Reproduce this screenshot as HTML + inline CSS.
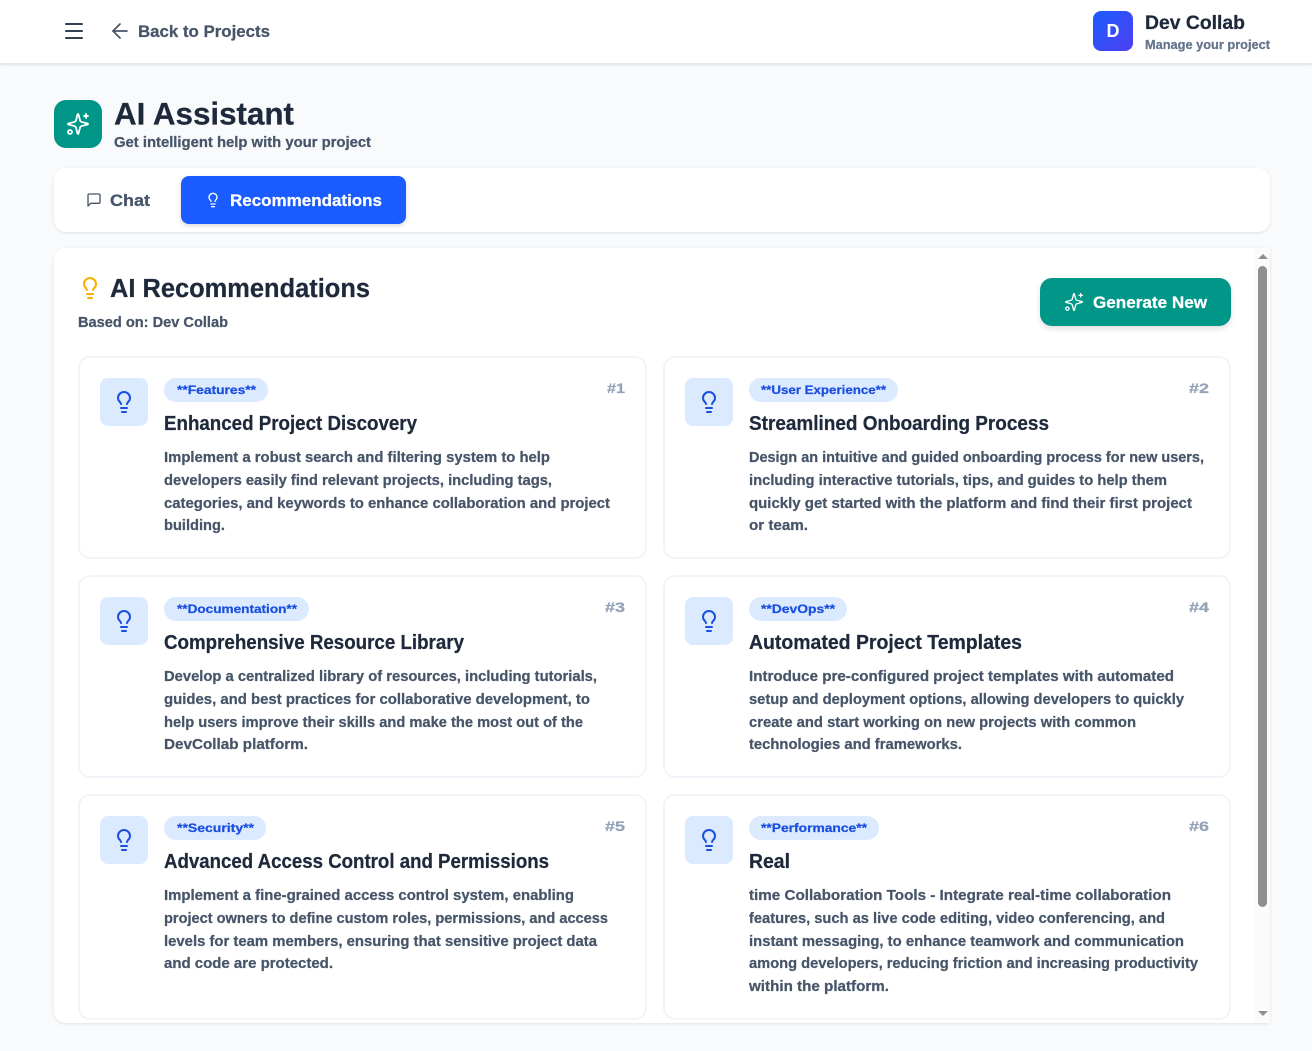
<!DOCTYPE html>
<html lang="en">
<head>
<meta charset="utf-8">
<title>AI Assistant</title>
<style>
html,body{margin:0;padding:0;width:1312px;height:1051px;overflow:hidden;background:#f8fafc}
body{position:relative;font-family:"Liberation Sans",sans-serif}
.b{position:absolute;box-sizing:border-box}
svg.o{position:absolute;left:0;top:0}
text{font-family:"Liberation Sans",sans-serif;font-weight:700;stroke-width:.25px}
.d{font-size:14.8px;fill:#475569;stroke:#475569}
.t{font-size:20px;fill:#1e293b;stroke:#1e293b}
.g{font-size:12.200px;fill:#1a4fe0;stroke:#1a4fe0}
.n{font-size:14px;fill:#94a3b8;stroke:#94a3b8}
.i{fill:none;stroke-linecap:round;stroke-linejoin:round}
.card{background:#fff;border:2px solid #f1f5f9;border-radius:12px}
.ib{background:#dbeafe;border-radius:8px;width:48px;height:48px}
.pill{background:#dbeafe;border-radius:12px;height:24px}
</style>
</head>
<body>
<div class="b" style="left:0;top:0;width:1312px;height:65px;background:#fff;border-bottom:2px solid #e2e8f0;box-shadow:0 1px 2px rgba(0,0,0,.05)"></div>
<div class="b" style="left:1093px;top:11px;width:40px;height:40px;border-radius:8px;background:linear-gradient(135deg,#1a5cff,#4f3ff0)"></div>
<div class="b" style="left:54px;top:100px;width:48px;height:48px;border-radius:12px;background:#009688"></div>
<div class="b" style="left:54px;top:168px;width:1216px;height:64px;border-radius:12px;background:#fff;box-shadow:0 1px 3px rgba(0,0,0,.1)"></div>
<div class="b" style="left:181px;top:176px;width:225px;height:48px;border-radius:8px;background:#1a5cff;box-shadow:0 2px 5px rgba(0,0,0,.15)"></div>
<div class="b" style="left:54px;top:248px;width:1216px;height:775px;border-radius:12px 0 0 12px;background:#fff;box-shadow:0 1px 3px rgba(0,0,0,.1);overflow:hidden">
  <div class="b" style="left:1201px;top:0;width:15px;height:775px;background:#fbfbfb"></div>
  <div class="b" style="left:1204px;top:18px;width:9px;height:641px;border-radius:5px;background:#8f8f8f"></div>
  <div class="b" style="left:1204px;top:6px;width:0;height:0;border-left:5px solid transparent;border-right:5px solid transparent;border-bottom:5px solid #8f8f8f"></div>
  <div class="b" style="left:1204px;top:763px;width:0;height:0;border-left:5px solid transparent;border-right:5px solid transparent;border-top:5px solid #8f8f8f"></div>
</div>
<div class="b" style="left:1040px;top:278px;width:191px;height:48px;border-radius:12px;background:#009688;box-shadow:0 3px 6px rgba(0,0,0,.12)"></div>

<div class="b card" style="left:78px;top:356px;width:569px;height:203px"></div>
<div class="b card" style="left:663px;top:356px;width:568px;height:203px"></div>
<div class="b card" style="left:78px;top:575px;width:569px;height:203px"></div>
<div class="b card" style="left:663px;top:575px;width:568px;height:203px"></div>
<div class="b card" style="left:78px;top:794px;width:569px;height:226px"></div>
<div class="b card" style="left:663px;top:794px;width:568px;height:226px"></div>

<div class="b ib" style="left:100px;top:378px"></div>
<div class="b ib" style="left:685px;top:378px"></div>
<div class="b ib" style="left:100px;top:597px"></div>
<div class="b ib" style="left:685px;top:597px"></div>
<div class="b ib" style="left:100px;top:816px"></div>
<div class="b ib" style="left:685px;top:816px"></div>

<div class="b pill" style="left:164px;top:378px;width:104px"></div>
<div class="b pill" style="left:749px;top:378px;width:149px"></div>
<div class="b pill" style="left:164px;top:597px;width:145px"></div>
<div class="b pill" style="left:749px;top:597px;width:98px"></div>
<div class="b pill" style="left:164px;top:816px;width:102px"></div>
<div class="b pill" style="left:749px;top:816px;width:130px"></div>

<svg class="o" width="1312" height="1051" viewBox="0 0 1312 1051" xmlns="http://www.w3.org/2000/svg">
<defs>
<g id="bulb" class="i"><path d="M15 14c.2-1 .7-1.7 1.500-2.500 1-.9 1.500-2.200 1.500-3.500A6 6 0 0 0 6 8c0 1 .2 2.200 1.500 3.500.7.7 1.300 1.500 1.500 2.500"/><path d="M9 18h6"/><path d="M10 22h4"/></g>
<g id="spark" class="i"><path d="M9.937 15.500A2 2 0 0 0 8.500 14.063l-6.135-1.582a.5.5 0 0 1 0-.962L8.500 9.936A2 2 0 0 0 9.937 8.500l1.582-6.135a.5.5 0 0 1 .963 0L14.063 8.500A2 2 0 0 0 15.500 9.937l6.135 1.581a.5.5 0 0 1 0 .964L15.500 14.063a2 2 0 0 0-1.437 1.437l-1.582 6.135a.5.5 0 0 1-.963 0z"/><path d="M20 2v4"/><path d="M22 4h-4"/><circle cx="4" cy="20" r="2"/></g>
</defs>

<!-- header -->
<g stroke="#334155" stroke-width="2" stroke-linecap="round"><path d="M66 24h16M66 31h16M66 38h16"/></g>
<g class="i" stroke="#475569" stroke-width="1.700" transform="translate(108 19)"><path d="m12 19-7-7 7-7"/><path d="M19 12H5"/></g>
<text x="138" y="37" font-size="16.800" fill="#475569" stroke="#475569" textLength="132" lengthAdjust="spacingAndGlyphs">Back to Projects</text>
<text x="1113" y="37" font-size="18" fill="#fff" text-anchor="middle">D</text>
<text x="1145" y="29" font-size="19" fill="#1e293b" stroke="#1e293b" textLength="100" lengthAdjust="spacingAndGlyphs">Dev Collab</text>
<text x="1145" y="49" font-size="12.500" fill="#64748b" stroke="#64748b" textLength="125" lengthAdjust="spacingAndGlyphs">Manage your project</text>

<!-- page title -->
<use href="#spark" transform="translate(66 112)" stroke="#fff" stroke-width="1.800"/>
<text x="114" y="124.500" font-size="31.500" fill="#1e293b" stroke="#1e293b" textLength="180" lengthAdjust="spacingAndGlyphs">AI Assistant</text>
<text x="114" y="147" font-size="14.800" fill="#475569" stroke="#475569" textLength="257" lengthAdjust="spacingAndGlyphs">Get intelligent help with your project</text>

<!-- tabs -->
<g class="i" stroke="#475569" stroke-width="2" transform="translate(86 192) scale(.667)"><path d="M21 15a2 2 0 0 1-2 2H7l-4 4V5a2 2 0 0 1 2-2h14a2 2 0 0 1 2 2z"/></g>
<text x="110" y="206" font-size="16.800" fill="#475569" stroke="#475569" textLength="40" lengthAdjust="spacingAndGlyphs">Chat</text>
<use href="#bulb" transform="translate(205 192) scale(.667)" stroke="#fff" stroke-width="2"/>
<text x="230" y="206" font-size="16.800" fill="#fff" stroke="#fff" textLength="152" lengthAdjust="spacingAndGlyphs">Recommendations</text>

<!-- section head -->
<use href="#bulb" transform="translate(78 276)" stroke="#f5b000" stroke-width="2"/>
<text x="110" y="297" font-size="25.500" fill="#1e293b" stroke="#1e293b" textLength="260" lengthAdjust="spacingAndGlyphs">AI Recommendations</text>
<text x="78" y="327" font-size="14.300" fill="#475569" stroke="#475569" textLength="150" lengthAdjust="spacingAndGlyphs">Based on: Dev Collab</text>
<use href="#spark" transform="translate(1064 292) scale(.833)" stroke="#fff" stroke-width="1.600"/>
<text x="1093" y="308" font-size="16.800" fill="#fff" stroke="#fff" textLength="114" lengthAdjust="spacingAndGlyphs">Generate New</text>

<!-- card icons -->
<g stroke="#1a4fe0" stroke-width="2">
<use href="#bulb" transform="translate(112 390)"/>
<use href="#bulb" transform="translate(697 390)"/>
<use href="#bulb" transform="translate(112 609)"/>
<use href="#bulb" transform="translate(697 609)"/>
<use href="#bulb" transform="translate(112 828)"/>
<use href="#bulb" transform="translate(697 828)"/>
</g>

<!-- tags -->
<text class="g" x="177" y="394" textLength="79" lengthAdjust="spacingAndGlyphs">**Features**</text>
<text class="g" x="761" y="394" textLength="125" lengthAdjust="spacingAndGlyphs">**User Experience**</text>
<text class="g" x="177" y="613" textLength="120" lengthAdjust="spacingAndGlyphs">**Documentation**</text>
<text class="g" x="761" y="613" textLength="74" lengthAdjust="spacingAndGlyphs">**DevOps**</text>
<text class="g" x="177" y="832" textLength="77" lengthAdjust="spacingAndGlyphs">**Security**</text>
<text class="g" x="761" y="832" textLength="106" lengthAdjust="spacingAndGlyphs">**Performance**</text>

<!-- numbers -->
<text class="n" x="607" y="393" textLength="18" lengthAdjust="spacingAndGlyphs">#1</text>
<text class="n" x="1189" y="393" textLength="20" lengthAdjust="spacingAndGlyphs">#2</text>
<text class="n" x="605" y="612" textLength="20" lengthAdjust="spacingAndGlyphs">#3</text>
<text class="n" x="1189" y="612" textLength="20" lengthAdjust="spacingAndGlyphs">#4</text>
<text class="n" x="605" y="831" textLength="20" lengthAdjust="spacingAndGlyphs">#5</text>
<text class="n" x="1189" y="831" textLength="20" lengthAdjust="spacingAndGlyphs">#6</text>

<!-- titles -->
<text class="t" x="164" y="430" textLength="253" lengthAdjust="spacingAndGlyphs">Enhanced Project Discovery</text>
<text class="t" x="749" y="430" textLength="300" lengthAdjust="spacingAndGlyphs">Streamlined Onboarding Process</text>
<text class="t" x="164" y="649" textLength="300" lengthAdjust="spacingAndGlyphs">Comprehensive Resource Library</text>
<text class="t" x="749" y="649" textLength="273" lengthAdjust="spacingAndGlyphs">Automated Project Templates</text>
<text class="t" x="164" y="868" textLength="385" lengthAdjust="spacingAndGlyphs">Advanced Access Control and Permissions</text>
<text class="t" x="749" y="868" textLength="41" lengthAdjust="spacingAndGlyphs">Real</text>

<!-- descriptions -->
<text class="d" x="164" y="462" textLength="386" lengthAdjust="spacingAndGlyphs">Implement a robust search and filtering system to help</text>
<text class="d" x="164" y="485" textLength="388" lengthAdjust="spacingAndGlyphs">developers easily find relevant projects, including tags,</text>
<text class="d" x="164" y="508" textLength="446" lengthAdjust="spacingAndGlyphs">categories, and keywords to enhance collaboration and project</text>
<text class="d" x="164" y="530" textLength="61" lengthAdjust="spacingAndGlyphs">building.</text>

<text class="d" x="749" y="462" textLength="455" lengthAdjust="spacingAndGlyphs">Design an intuitive and guided onboarding process for new users,</text>
<text class="d" x="749" y="485" textLength="418" lengthAdjust="spacingAndGlyphs">including interactive tutorials, tips, and guides to help them</text>
<text class="d" x="749" y="508" textLength="443" lengthAdjust="spacingAndGlyphs">quickly get started with the platform and find their first project</text>
<text class="d" x="749" y="530" textLength="59" lengthAdjust="spacingAndGlyphs">or team.</text>

<text class="d" x="164" y="681" textLength="433" lengthAdjust="spacingAndGlyphs">Develop a centralized library of resources, including tutorials,</text>
<text class="d" x="164" y="704" textLength="426" lengthAdjust="spacingAndGlyphs">guides, and best practices for collaborative development, to</text>
<text class="d" x="164" y="727" textLength="419" lengthAdjust="spacingAndGlyphs">help users improve their skills and make the most out of the</text>
<text class="d" x="164" y="749" textLength="144" lengthAdjust="spacingAndGlyphs">DevCollab platform.</text>

<text class="d" x="749" y="681" textLength="425" lengthAdjust="spacingAndGlyphs">Introduce pre-configured project templates with automated</text>
<text class="d" x="749" y="704" textLength="435" lengthAdjust="spacingAndGlyphs">setup and deployment options, allowing developers to quickly</text>
<text class="d" x="749" y="727" textLength="387" lengthAdjust="spacingAndGlyphs">create and start working on new projects with common</text>
<text class="d" x="749" y="749" textLength="213" lengthAdjust="spacingAndGlyphs">technologies and frameworks.</text>

<text class="d" x="164" y="900" textLength="410" lengthAdjust="spacingAndGlyphs">Implement a fine-grained access control system, enabling</text>
<text class="d" x="164" y="923" textLength="444" lengthAdjust="spacingAndGlyphs">project owners to define custom roles, permissions, and access</text>
<text class="d" x="164" y="946" textLength="433" lengthAdjust="spacingAndGlyphs">levels for team members, ensuring that sensitive project data</text>
<text class="d" x="164" y="968" textLength="169" lengthAdjust="spacingAndGlyphs">and code are protected.</text>

<text class="d" x="749" y="900" textLength="422" lengthAdjust="spacingAndGlyphs">time Collaboration Tools - Integrate real-time collaboration</text>
<text class="d" x="749" y="923" textLength="416" lengthAdjust="spacingAndGlyphs">features, such as live code editing, video conferencing, and</text>
<text class="d" x="749" y="946" textLength="435" lengthAdjust="spacingAndGlyphs">instant messaging, to enhance teamwork and communication</text>
<text class="d" x="749" y="968" textLength="449" lengthAdjust="spacingAndGlyphs">among developers, reducing friction and increasing productivity</text>
<text class="d" x="749" y="991" textLength="140" lengthAdjust="spacingAndGlyphs">within the platform.</text>
</svg>
</body>
</html>
